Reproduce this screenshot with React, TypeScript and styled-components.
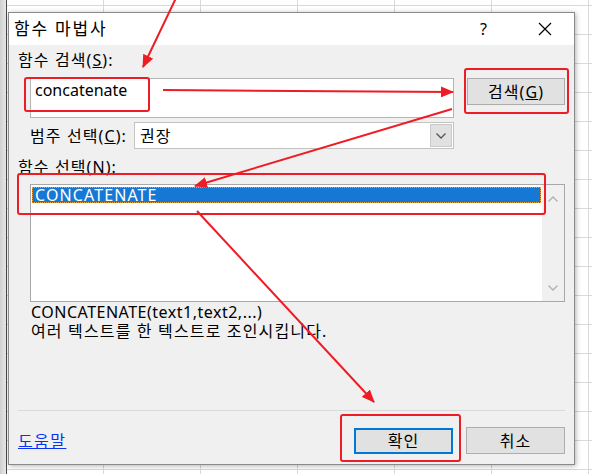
import React from "react";
import styled, { createGlobalStyle } from "styled-components";

const GlobalStyle = createGlobalStyle`
  html, body { margin: 0; padding: 0; background: #ffffff; }
  body { font-family: "Noto Sans", "Noto Sans CJK KR", sans-serif; }
  * { box-sizing: border-box; }
`;

const Page = styled.div`
  position: relative;
  width: 592px;
  height: 474px;
  overflow: hidden;
  padding: 12px 0 0 8px;
  background-color: #ffffff;
  background-image:
    linear-gradient(to right, #cfcfcf 0, #e9e9e9 6px, #4a4a4a 6px, #4a4a4a 7px, transparent 7px),
    linear-gradient(to bottom, transparent 28px, #d9d9d9 28px, #d9d9d9 29px, transparent 29px),
    linear-gradient(to right, transparent 96px, #d9d9d9 96px, #d9d9d9 97px, transparent 97px);
  background-size: 8px 100%, 100% 29px, 97px 100%;
  background-repeat: no-repeat, repeat, repeat;
  background-position: 0 0, 0 6px, 7px 0;
`;

const Dialog = styled.div`
  width: 567px;
  height: 453px;
  border: 1px solid #8a8a8a;
  background: #f0f0f0;
  box-shadow: 1px 1px 5px rgba(0, 0, 0, 0.3);
  display: flex;
  flex-direction: column;
  font-size: 16px;
  letter-spacing: 1.1px;
  color: #000;
`;

const TitleBar = styled.div`
  height: 32px;
  flex: none;
  background: #ffffff;
  display: flex;
  align-items: center;
  padding-left: 5px;
`;

const Title = styled.div`
  flex: 1;
  font-size: 17px;
  letter-spacing: 1.8px;
  line-height: 20px;
`;

const TitleControls = styled.div`
  display: flex;
  align-items: center;
  gap: 15px;
  padding-right: 6px;
  height: 100%;
`;

const TitleButton = styled.div`
  width: 46px;
  height: 100%;
  display: flex;
  align-items: center;
  justify-content: center;
  font-size: 16px;
`;

const Body = styled.div`
  flex: 1;
  display: flex;
  flex-direction: column;
  padding: 7px 9px 0 9px;
`;

const Label = styled.div<{ $top?: number }>`
  height: 16px;
  line-height: 16px;
  margin-top: ${(p) => p.$top ?? 0}px;
  white-space: nowrap;
`;

const SearchRow = styled.div`
  display: flex;
  align-items: flex-start;
  gap: 13px;
  margin-top: 10px;
  padding-left: 12px;
`;

const TextBox = styled.div`
  width: 424px;
  height: 40px;
  background: #ffffff;
  border: 1px solid #b5b5b5;
  padding: 1px 4px;
  line-height: 20px;
  letter-spacing: 0;
`;

const PushButton = styled.div<{ $width: number; $default?: boolean }>`
  width: ${(p) => p.$width}px;
  height: ${(p) => (p.$default ? 26 : 27)}px;
  background: #e1e1e1;
  border: ${(p) => (p.$default ? "2px solid #0078d7" : "1px solid #adadad")};
  display: flex;
  align-items: center;
  justify-content: center;
  line-height: 18px;
  flex: none;
`;

const CategoryRow = styled.div`
  display: flex;
  align-items: center;
  margin-top: 4px;
  padding-left: 12px;
`;

const CategoryLabel = styled.div`
  width: 104px;
  line-height: 18px;
  white-space: nowrap;
`;

const Select = styled.div`
  width: 320px;
  height: 27px;
  background: #ffffff;
  border: 1px solid #c3c3c3;
  display: flex;
  align-items: center;
  padding: 1px 1px 1px 5px;
`;

const SelectValue = styled.div`
  flex: 1;
  line-height: 18px;
`;

const DropButton = styled.div`
  width: 22px;
  height: 23px;
  background: #e1e1e1;
  border: 1px solid #cacaca;
  display: flex;
  align-items: center;
  justify-content: center;
`;

const ListBox = styled.div`
  width: 535px;
  height: 118px;
  margin-top: 9px;
  margin-left: 12px;
  border: 1px solid #a8a8a8;
  background: #ffffff;
  display: flex;
`;

const ListItems = styled.div`
  flex: 1;
  padding: 2px 1px 0 1px;
`;

const SelectedItem = styled.div`
  height: 16px;
  background: #1478d4;
  color: #ffffff;
  outline: 1px dotted #e8a040;
  outline-offset: -1px;
  padding-left: 3px;
  line-height: 16px;
  letter-spacing: 1.1px;
`;

const ScrollBar = styled.div`
  width: 22px;
  background: #f0f0f0;
  display: flex;
  flex-direction: column;
  justify-content: space-between;
  align-items: center;
  padding: 11px 0 10px;
`;

const Description = styled.div`
  margin-top: 1px;
  margin-left: 13px;
  display: flex;
  flex-direction: column;
`;

const DescLine = styled.div<{ $latin?: boolean }>`
  height: 19px;
  line-height: 19px;
  white-space: nowrap;
  letter-spacing: ${(p) => (p.$latin ? "0.5px" : "1.15px")};
`;

const Footer = styled.div`
  margin-top: auto;
  border-top: 1px solid #d9d9d9;
  padding: 16px 0 10px;
  display: flex;
  align-items: center;
  gap: 13px;
`;

const HelpLink = styled.span`
  color: #0a32f5;
  text-decoration: underline;
  margin-right: auto;
  line-height: 18px;
  letter-spacing: 1.4px;
`;

const Overlay = styled.svg`
  position: absolute;
  left: 0;
  top: 0;
  width: 592px;
  height: 474px;
  pointer-events: none;
`;

const Chevron = ({ up, color }: { up?: boolean; color: string }) => (
  <svg width="10" height="6" viewBox="0 0 10 6">
    <polyline
      points={up ? "0.5,5.5 5,1 9.5,5.5" : "0.5,0.5 5,5 9.5,0.5"}
      fill="none"
      stroke={color}
      strokeWidth="1.3"
    />
  </svg>
);

const CloseIcon = () => (
  <svg width="14" height="14" viewBox="0 0 14 14">
    <path d="M1 1 L13 13 M13 1 L1 13" stroke="#000" strokeWidth="1.2" />
  </svg>
);

const red = "#ee1c25";

const boxes = [
  { x: 25, y: 78, w: 124, h: 33 },
  { x: 465, y: 69, w: 103, h: 44 },
  { x: 18, y: 174, w: 527, h: 40 },
  { x: 341, y: 415, w: 119, h: 46 },
];

const arrows = [
  { x1: 176, y1: -2, x2: 143, y2: 67 },
  { x1: 163, y1: 90, x2: 453, y2: 92 },
  { x1: 452, y1: 109, x2: 195, y2: 186 },
  { x1: 197, y1: 211, x2: 374, y2: 402 },
];

export default function App() {
  return (
    <>
      <GlobalStyle />
      <Page>
        <Dialog>
          <TitleBar>
            <Title>함수 마법사</Title>
            <TitleControls>
              <TitleButton>?</TitleButton>
              <TitleButton>
                <CloseIcon />
              </TitleButton>
            </TitleControls>
          </TitleBar>
          <Body>
            <Label>
              함수 검색(<u>S</u>):
            </Label>
            <SearchRow>
              <TextBox>concatenate</TextBox>
              <PushButton $width={98}>
                검색(<u>G</u>)
              </PushButton>
            </SearchRow>
            <CategoryRow>
              <CategoryLabel>
                범주 선택(<u>C</u>):
              </CategoryLabel>
              <Select>
                <SelectValue>권장</SelectValue>
                <DropButton>
                  <Chevron color="#555" />
                </DropButton>
              </Select>
            </CategoryRow>
            <Label $top={10}>
              함수 선택(<u>N</u>):
            </Label>
            <ListBox>
              <ListItems>
                <SelectedItem>CONCATENATE</SelectedItem>
              </ListItems>
              <ScrollBar>
                <Chevron up color="#b0b0b0" />
                <Chevron color="#b0b0b0" />
              </ScrollBar>
            </ListBox>
            <Description>
              <DescLine $latin>CONCATENATE(text1,text2,...)</DescLine>
              <DescLine>여러 텍스트를 한 텍스트로 조인시킵니다.</DescLine>
            </Description>
            <Footer>
              <HelpLink>도움말</HelpLink>
              <PushButton $width={99} $default>
                확인
              </PushButton>
              <PushButton $width={99}>취소</PushButton>
            </Footer>
          </Body>
        </Dialog>
        <Overlay viewBox="0 0 592 474">
          <defs>
            <marker
              id="head"
              markerUnits="userSpaceOnUse"
              markerWidth="13"
              markerHeight="11"
              refX="12"
              refY="5.5"
              orient="auto"
            >
              <path d="M0,0 L13,5.5 L0,11 z" fill={red} />
            </marker>
          </defs>
          {boxes.map((b, i) => (
            <rect
              key={i}
              x={b.x}
              y={b.y}
              width={b.w}
              height={b.h}
              rx="2"
              fill="none"
              stroke={red}
              strokeWidth="2"
            />
          ))}
          {arrows.map((a, i) => (
            <line
              key={i}
              x1={a.x1}
              y1={a.y1}
              x2={a.x2}
              y2={a.y2}
              stroke={red}
              strokeWidth="2"
              markerEnd="url(#head)"
            />
          ))}
        </Overlay>
      </Page>
    </>
  );
}
